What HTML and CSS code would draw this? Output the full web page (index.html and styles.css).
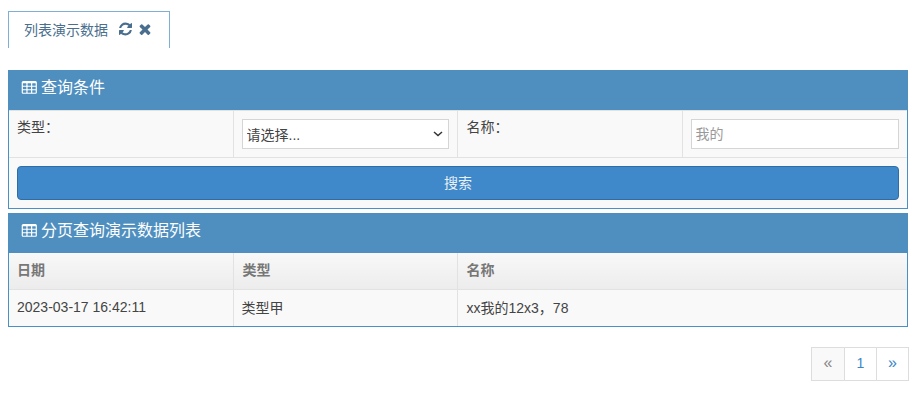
FILE: index.html
```html
<!DOCTYPE html>
<html lang="zh-CN">
<head>
   <meta charset="UTF-8">
   <title>列表演示数据</title>
   <link rel="stylesheet" href="styles.css">
</head>
<body>
   <div class="container">
      <div class="tabs">
         <div class="tab">
            <span class="tab-title">列表演示数据</span>
            <svg class="refresh-icon" viewBox="128 128 1536 1536"><path d="M1639 1056q0 5-1 7-64 268-268 434.500t-478 166.500q-146 0-282.500-55t-243.500-157l-129 129q-19 19-45 19t-45-19-19-45v-448q0-26 19-45t45-19h448q26 0 45 19t19 45-19 45l-137 137q71 66 161 102t187 36q134 0 250-65t186-179q11-17 53-117 8-23 30-23h192q13 0 22.500 9.500t9.500 22.500zm25-800v448q0 26-19 45t-45 19h-448q-26 0-45-19t-19-45 19-45l138-138q-148-137-349-137-134 0-250 65t-186 179q-11 17-53 117-8 23-30 23h-199q-13 0-22.500-9.500t-9.500-22.500v-7q65-268 270-434.500t480-166.500q146 0 284 55.500t245 156.500l130-129q19-19 45-19t45 19 19 45z"/></svg>
            <svg class="close-icon" viewBox="240 240 1312 1312"><path d="M1490 1322q0 40-28 68l-136 136q-28 28-68 28t-68-28l-294-294-294 294q-28 28-68 28t-68-28l-136-136q-28-28-28-68t28-68l294-294-294-294q-28-28-28-68t28-68l136-136q28-28 68-28t68 28l294 294 294-294q28-28 68-28t68 28l136 136q28 28 28 68t-28 68l-294 294 294 294q28 28 28 68z"/></svg>
         </div>
      </div>

      <div class="panel">
         <div class="panel-heading">
            <svg class="grid-icon" viewBox="0 128 1728 1536"><path d="M576 1376v-192q0-14-9-23t-23-9h-320q-14 0-23 9t-9 23v192q0 14 9 23t23 9h320q14 0 23-9t9-23zm0-384v-192q0-14-9-23t-23-9h-320q-14 0-23 9t-9 23v192q0 14 9 23t23 9h320q14 0 23-9t9-23zm512 384v-192q0-14-9-23t-23-9h-320q-14 0-23 9t-9 23v192q0 14 9 23t23 9h320q14 0 23-9t9-23zm-512-768v-192q0-14-9-23t-23-9h-320q-14 0-23 9t-9 23v192q0 14 9 23t23 9h320q14 0 23-9t9-23zm512 384v-192q0-14-9-23t-23-9h-320q-14 0-23 9t-9 23v192q0 14 9 23t23 9h320q14 0 23-9t9-23zm512 384v-192q0-14-9-23t-23-9h-320q-14 0-23 9t-9 23v192q0 14 9 23t23 9h320q14 0 23-9t9-23zm-512-768v-192q0-14-9-23t-23-9h-320q-14 0-23 9t-9 23v192q0 14 9 23t23 9h320q14 0 23-9t9-23zm512 384v-192q0-14-9-23t-23-9h-320q-14 0-23 9t-9 23v192q0 14 9 23t23 9h320q14 0 23-9t9-23zm0-384v-192q0-14-9-23t-23-9h-320q-14 0-23 9t-9 23v192q0 14 9 23t23 9h320q14 0 23-9t9-23zm128-320v1088q0 66-47 113t-113 47h-1344q-66 0-113-47t-47-113v-1088q0-66 47-113t113-47h1344q66 0 113 47t47 113z"/></svg>
            <span>查询条件</span>
         </div>
         <table class="form-table">
            <tr class="field-row">
               <td class="label col-a">类型：</td>
               <td class="field col-a">
                  <select class="form-input form-select">
                     <option>请选择...</option>
                  </select>
               </td>
               <td class="label col-b name-col">名称：</td>
               <td class="field col-b">
                  <input class="form-input" type="text" placeholder="我的">
               </td>
            </tr>
            <tr>
               <td class="search-cell" colspan="4"><button class="btn">搜索</button></td>
            </tr>
         </table>
      </div>

      <div class="panel list-panel">
         <div class="panel-heading">
            <svg class="grid-icon" viewBox="0 128 1728 1536"><path d="M576 1376v-192q0-14-9-23t-23-9h-320q-14 0-23 9t-9 23v192q0 14 9 23t23 9h320q14 0 23-9t9-23zm0-384v-192q0-14-9-23t-23-9h-320q-14 0-23 9t-9 23v192q0 14 9 23t23 9h320q14 0 23-9t9-23zm512 384v-192q0-14-9-23t-23-9h-320q-14 0-23 9t-9 23v192q0 14 9 23t23 9h320q14 0 23-9t9-23zm-512-768v-192q0-14-9-23t-23-9h-320q-14 0-23 9t-9 23v192q0 14 9 23t23 9h320q14 0 23-9t9-23zm512 384v-192q0-14-9-23t-23-9h-320q-14 0-23 9t-9 23v192q0 14 9 23t23 9h320q14 0 23-9t9-23zm512 384v-192q0-14-9-23t-23-9h-320q-14 0-23 9t-9 23v192q0 14 9 23t23 9h320q14 0 23-9t9-23zm-512-768v-192q0-14-9-23t-23-9h-320q-14 0-23 9t-9 23v192q0 14 9 23t23 9h320q14 0 23-9t9-23zm512 384v-192q0-14-9-23t-23-9h-320q-14 0-23 9t-9 23v192q0 14 9 23t23 9h320q14 0 23-9t9-23zm0-384v-192q0-14-9-23t-23-9h-320q-14 0-23 9t-9 23v192q0 14 9 23t23 9h320q14 0 23-9t9-23zm128-320v1088q0 66-47 113t-113 47h-1344q-66 0-113-47t-47-113v-1088q0-66 47-113t113-47h1344q66 0 113 47t47 113z"/></svg>
            <span>分页查询演示数据列表</span>
         </div>
         <table class="data-table">
            <thead>
               <tr>
                  <th class="col-a">日期</th>
                  <th class="col-a type-col">类型</th>
                  <th class="name-col">名称</th>
               </tr>
            </thead>
            <tbody>
               <tr>
                  <td>2023-03-17 16:42:11</td>
                  <td>类型甲</td>
                  <td class="name-col">xx我的12x3，78</td>
               </tr>
            </tbody>
         </table>
      </div>

      <div class="pagination">
         <a class="page-item disabled">«</a>
         <a class="page-item">1</a>
         <a class="page-item">»</a>
      </div>
   </div>
</body>
</html>
```

FILE: styles.css
```css
* { box-sizing: border-box; }
body {
   margin: 0;
   padding: 0;
   background: #fff;
   color: #444;
   font-family: "Liberation Sans", "Noto Sans CJK SC", sans-serif;
   font-size: 14px;
}
.container {
   width: 900px;
   margin-left: 8px;
   padding-top: 11px;
}
.tabs {
   display: flex;
   margin-bottom: 22px;
}
.tab {
   display: flex;
   align-items: center;
   width: 162px;
   height: 37px;
   padding: 0 0 3px 15px;
   border: 1px solid #7fb0d4;
   border-bottom: none;
   color: #4a6f8e;
}
.tab-title { margin-right: 11px; }
.refresh-icon {
   width: 13px;
   height: 14px;
   fill: #4a6f8e;
}
.close-icon {
   width: 12px;
   height: 12px;
   margin-left: 7px;
   fill: #4a6f8e;
}
.panel {
   border: 1px solid #4a8fc6;
   border-top: none;
   background: #f9f9f9;
}
.list-panel { margin-top: 4px; }
.panel-heading {
   display: flex;
   align-items: center;
   gap: 4px;
   height: 40px;
   margin: 0 -1px;
   padding: 0 0 9px 13px;
   background: #4f8fbf;
   color: #fff;
   font-size: 16px;
}
.grid-icon {
   width: 16px;
   height: 14px;
   margin-top: 4px;
   fill: #fff;
}
table {
   width: 100%;
   border-collapse: collapse;
   table-layout: fixed;
}
.form-table td, .data-table td, .data-table th {
   border: 1px solid #e2e2e2;
   border-top: none;
   padding: 8px;
   vertical-align: top;
}
td:first-child, th:first-child { border-left: none !important; }
td:last-child, th:last-child { border-right: none !important; }
tr:last-child td { border-bottom: none !important; }
.col-a { width: 224px; }
.col-b { width: 225px; }
.form-table { border-top: 1px solid #e2e2e2; }
.field-row { height: 47px; }
.form-table .label { padding-top: 5px; }
.form-input {
   display: block;
   width: 100%;
   height: 30px;
   border: 1px solid #d5d5d5;
   border-radius: 0;
   background-color: #fff;
   color: #444;
   font-family: inherit;
   font-size: 14px;
   padding: 0 4px;
}
.form-input::placeholder { color: #999; }
.form-select {
   appearance: none;
   padding: 2px 0 0 4px;
   background-image: url("data:image/svg+xml,%3Csvg xmlns='http://www.w3.org/2000/svg' width='10' height='6'%3E%3Cpath d='M1 1l4 3.500L9 1' fill='none' stroke='%23333' stroke-width='1.500'/%3E%3C/svg%3E");
   background-repeat: no-repeat;
   background-position: right 5px center;
}
.btn {
   display: block;
   width: 100%;
   height: 34px;
   padding: 0 0 2px;
   border: 1px solid #2f6ea5;
   border-radius: 4px;
   background: #3f88c9;
   color: #e8f0f8;
   font-family: inherit;
   font-size: 14px;
}
.data-table th {
   height: 36px;
   padding: 0 8px 4px;
   text-align: left;
   color: #777;
   font-weight: bold;
   vertical-align: middle;
   background: linear-gradient(#f8f8f8, #ececec);
}
.data-table td {
   height: 37px;
   padding: 0 8px 2px;
   vertical-align: middle;
}
.form-table .name-col, .data-table .name-col { padding-left: 9px; }
.data-table .type-col { padding-left: 9px; }
.pagination {
   display: flex;
   justify-content: flex-end;
   margin: 20px -1px 0 0;
}
.page-item {
   display: flex;
   align-items: center;
   justify-content: center;
   width: 33px;
   height: 34px;
   margin-left: -1px;
   padding-bottom: 2px;
   border: 1px solid #ddd;
   background: #fff;
   color: #3a87c8;
   font-size: 16px;
}
.page-item:nth-child(2) { font-size: 14px; padding-bottom: 3px; }
.page-item.disabled {
   width: 34px;
   background: #f9f9f9;
   color: #888;
}
```
